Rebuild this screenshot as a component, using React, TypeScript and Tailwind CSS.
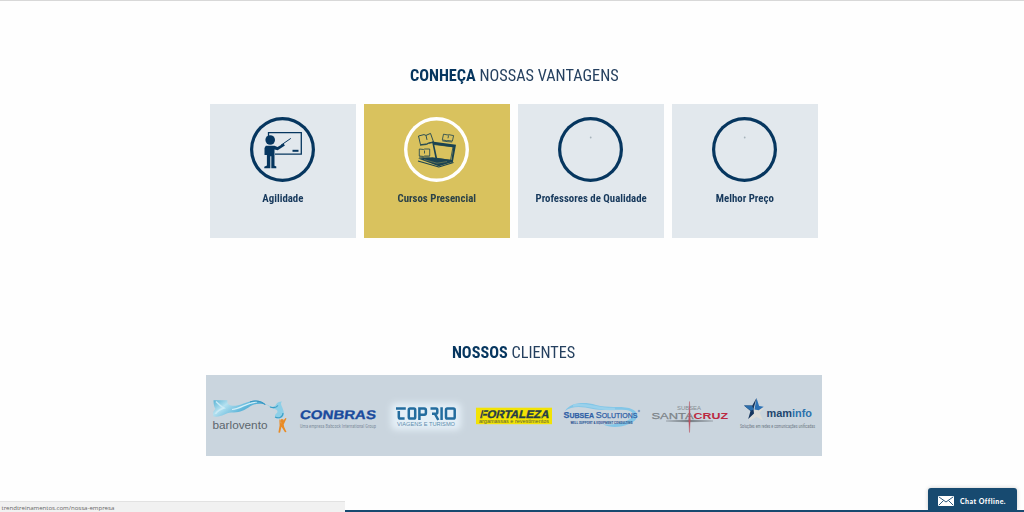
import React from "react";

const NAVY = "#06365f";

function TeacherIcon() {
  return (
    <svg viewBox="250 117 65 65" className="h-full w-full">
      <path d="M268.500 137V132.700H301.300V154.200H275" fill="none" stroke={NAVY} strokeWidth="1.300" />
      <rect x="292.500" y="149.800" width="6" height="2" fill={NAVY} />
      <circle cx="270.200" cy="140" r="4.800" fill={NAVY} />
      <path d="M265.800 145.800h8.700l3 1.200 6-3.600 1.400 2-7.200 4.900-3.200-.7v16.200l1.800.8v1.600h-5v-12h-1v12h-6v-1.400l2.600-1.200V155h-2.400v-7z" fill={NAVY} />
      <path d="M281 145.200l9.800-6.800" stroke={NAVY} strokeWidth="1" />
    </svg>
  );
}

function CoursesIcon() {
  const ink = "#1b4351";
  return (
    <svg viewBox="404 117 65 65" className="h-full w-full" fill="none" stroke={ink} strokeLinejoin="round">
      <path d="M418.500 136l5.500-1.400 2 .8 4.500-2 3 8.500-5 1-2 1-6 .8zM426 135.400l1 4.500M420 145.200l6.500-.7 2-1 5-1.100" strokeWidth=".9" />
      <path d="M443.500 134.200l4.500.8 1-.3 4.600.9-1.200 5.500-4.600-.6-1 .2-4.500-.8zM448.500 135.500l-.5 2.800M442.200 140.800l4.800.8 5.200.4" strokeWidth=".8" />
      <path d="M419.300 149l4.400.5 1-.5h5v7h-5l-1 .5-4.400-.5zM424.500 150.500v3M419 157l4.800.5 1-.4h5" strokeWidth=".8" />
      <path d="M432 141.500l24 3.200-3.200 17.500-1.700.6 2.100-15.600-19-2.600 3 14-1.500 1.200z" fill={ink} stroke="none" />
      <path d="M434 144.500l19 2.300-2.500 13.500-13.600-2" stroke={ink} strokeWidth=".8" />
      <path d="M418 158.500l14.500-1.200 4.500 .8 15 2 .500 1.800-13.700 4.300z" fill={ink} stroke="none" />
      <path d="M418 161l20.800 6 14.700-4.500" strokeWidth="1.100" />
      <path d="M424 159.600l13 3.600 10-1.600" stroke="#d9c25e" strokeWidth=".35" />
    </svg>
  );
}

function Dot() {
  return (
    <svg viewBox="0 0 65 65" className="h-full w-full">
      <circle cx="32.700" cy="20.500" r=".9" fill="#a8b3bb" />
    </svg>
  );
}

type CardProps = { label: string; icon: React.ReactNode; active?: boolean };

function Card({ label, icon, active }: CardProps) {
  return (
    <div className={`flex h-[134px] flex-col items-center pt-[13px] ${active ? "bg-[#d9c25e]" : "bg-[#e2e8ed]"}`}>
      <div className={`mr-px h-[65px] w-[65px] rounded-full ${active ? "shadow-[inset_0_0_0_3.4px_#fff]" : "shadow-[inset_0_0_0_3.2px_#06365f]"}`}>
        {icon}
      </div>
      <p className={`mt-[8px] scale-x-[0.94] text-[11.5px] leading-[16px] font-bold whitespace-nowrap ${active ? "text-[#2b4248]" : "text-[#17395c]"}`}>
        {label}
      </p>
    </div>
  );
}

function Heading({ strong, children }: { strong: string; children: React.ReactNode }) {
  return (
    <h2 className="ml-[4px] h-[25px] scale-x-[0.955] text-[17px] leading-[25px] whitespace-nowrap text-[#25405f]">
      <b className="text-[#06365f]">{strong}</b> {children}
    </h2>
  );
}

type TProps = React.SVGProps<SVGTextElement> & { w: number };

function T({ w, children, ...rest }: TProps) {
  return (
    <text textLength={w} lengthAdjust="spacingAndGlyphs" fontFamily="'Liberation Sans', sans-serif" {...rest}>
      {children}
    </text>
  );
}

const logo = "h-[81px] w-[88px]";
const condensed = "'Roboto Condensed', 'Roboto', sans-serif";

function Barlovento() {
  return (
    <svg viewBox="206 375 88 81" className={logo}>
      <defs>
        <linearGradient id="wave" x1="0" y1="0" x2="1" y2=".4">
          <stop offset="0" stopColor="#58b2d4" />
          <stop offset=".3" stopColor="#b5e1f0" />
          <stop offset=".65" stopColor="#62b8db" />
          <stop offset="1" stopColor="#3b9cc9" />
        </linearGradient>
      </defs>
      <path d="M213.500 400.200h14c-1 4 3 6 8 5.500 8-1 13-5.200 20-5.200 5 0 8 2 11 4.500-8-2.500-13-1-18 2.500-6 4-10 5-17 5-7 .2-9 5-18 4-1.500-5 1-6 2-7.500-1-1.500-2-4-2-8.800z" fill="url(#wave)" />
      <path d="M216 401.500c3 3 5 5 8 6.500-3 1-7 3-8.500 6" fill="none" stroke="#cbeaf5" strokeWidth="1.400" />
      <path d="M232 409.500c10-1 14-7 25-7.500" fill="none" stroke="#d3eff8" strokeWidth="1.200" />
      <path d="M250 402c5-2 11-1 15 2.500" fill="none" stroke="#3393bf" strokeWidth="1" />
      <path d="M266 404c6 4 9 3 10 .500 1-2 3-3 6-3-2 2-.5 4 .5 6.500 1 3 2 5 1 8-1.500 3-7 3.500-8.500.5-.5-2.500 2.500-3 2.500-5 0-3-6-2-11.500-7.500z" fill="#8dcfe7" />
      <path d="M275 417c4 2 8 0 8-4M270 407c3 1 6 1 8-1.500" fill="none" stroke="#3b9dc6" strokeWidth="1.100" />
      <circle cx="282" cy="421" r="1.900" fill="#e98b25" />
      <path d="M279.300 418.500l1.700 5 4.500-5.500 1 .5-2.800 6 .5 2.500 2.300 5-1.500.3-3.500-5.500-1.500 6-1.600-.2 1.200-7z" fill="#e98b25" />
      <T x="212.500" y="429" w={55} fontSize="11" fill="#5c666d">barlovento</T>
    </svg>
  );
}

function Conbras() {
  return (
    <svg viewBox="294 375 88 81" className={logo}>
      <g transform="translate(299.500 419) skewX(-8)">
        <T x="0" y="0" w={76} fontSize="12.500" fontWeight="bold" fill="#1b4b9d" stroke="#1b4b9d" strokeWidth=".3">CONBRAS</T>
      </g>
      <T x="300" y="428" w={76} fontSize="4.600" fill="#8290a0" fontFamily={condensed}>Uma empresa Babcock International Group</T>
    </svg>
  );
}

function TopRio() {
  return (
    <svg viewBox="382 375 88 81" className={logo}>
      <defs>
        <filter id="glow" x="-20%" y="-40%" width="140%" height="180%"><feGaussianBlur stdDeviation="3" /></filter>
      </defs>
      <rect x="391" y="403" width="70" height="27" rx="5" fill="#e4eff7" filter="url(#glow)" />
      <g fill="none" stroke="#236c9e" strokeWidth="2.500">
        <path d="M396 408.600h9.800M398.800 411v6q0 1.600 1.600 1.600h4.200" />
        <rect x="408.800" y="408.600" width="6.400" height="10" rx="1.300" />
        <path d="M419.400 420v-11.400h4.800q1.700 0 1.700 1.700v2.800q0 1.700-1.700 1.700H419.400" />
        <path d="M430.500 408.600h5.500q1.300 0 1.300 1.500v2.200q0 1.500-1.300 1.500h-4M435 414l3.300 6M441.600 407.200V420" />
        <rect x="446" y="408.600" width="8.700" height="10" rx="1.300" />
      </g>
      <T x="397" y="426.300" w={58} fontSize="5" fill="#5d8cad">VIAGENS E TURISMO</T>
    </svg>
  );
}

function Fortaleza() {
  return (
    <svg viewBox="470 375 88 81" className={logo}>
      <rect x="476" y="407.700" width="76" height="16.500" fill="#f2e304" />
      <g transform="translate(479.500 418) skewX(-14)">
        <T x="0" y="0" w={69} fontSize="11" fontWeight="bold" fill="#263d48" stroke="#263d48" strokeWidth=".4">FORTALEZA</T>
        <path d="M2.500 0v-8M19 0v-8M38.500 0v-5M62 0v-8" stroke="#f2e304" strokeWidth=".6" />
      </g>
      <T x="479" y="422.800" w={70} fontSize="5" fill="#59623b">argamassas e revestimentos</T>
    </svg>
  );
}

function SubseaSolutions() {
  return (
    <svg viewBox="558 375 88 81" className={logo}>
      <path d="M565 411c5-8 18-10 31-6 12 3 23 1 33 3 11 3 11 12 0 16-8 3.500-19 4-26 .5 11 .5 21-1.500 27-5.500 6-4 3-8-4-9-12-1-22 1-33-1-12-3-22-3-28 2z" fill="#83c6e7" />
      <path d="M573 405.500c14-3 24 4.500 42 3.500" fill="none" stroke="#9ad1eb" strokeWidth="2.500" />
      <text x="563.500" y="418" textLength="74" lengthAdjust="spacingAndGlyphs" fontFamily="'Liberation Sans', sans-serif" fontSize="7.500" fill="#2f5fa6" stroke="#2f5fa6" strokeWidth=".25">
        <tspan fontSize="9.500" fontWeight="bold">S</tspan><tspan fontWeight="bold">UBSEA </tspan><tspan fontSize="9.500">S</tspan>OLUTIONS
      </text>
      <circle cx="639" cy="411" r=".8" fill="none" stroke="#2f5fa6" strokeWidth=".5" />
      <T x="570.500" y="423.600" w={62} fontSize="3.700" fill="#345b94" fontWeight="bold" fontFamily={condensed}>WELL SUPPORT &amp; EQUIPMENT CONSULTING</T>
    </svg>
  );
}

function SantaCruz() {
  return (
    <svg viewBox="646 375 88 81" className={logo}>
      <T x="677" y="409.500" w={24} fontSize="4.800" fill="#858d93">SUBSEA</T>
      <T x="651.500" y="419" w={42} fontSize="9.500" fill="#7c8388" stroke="#7c8388" strokeWidth=".25">SANTA</T>
      <T x="693.500" y="419" w={34.500} fontSize="9.500" fill="#bc2941" fontWeight="bold">CRUZ</T>
      <path d="M666 421l23-1 24 1-24 1z" fill="#747c82" stroke="#747c82" strokeWidth=".3" />
      <path d="M689.500 401.500l.8 18-.8 13-.8-13z" fill="#ba5261" stroke="#ba5261" strokeWidth=".4" />
    </svg>
  );
}

function Maminfo() {
  return (
    <svg viewBox="734 375 88 81" className={logo}>
      <path d="M754 410l5-2.500 5 .5-4.500 4.500 3.500 8-6.500-3.700-7.500 4.500 2.500-8.500z" fill="#dddcd7" />
      <path d="M756.500 398l2.600 8 4.600.8-5 3.400-4.200-.7z" fill="#2d72b5" />
      <path d="M756.500 398l-4.200 7.500-8.300 0 6.500 5.500-2.300 8 5.800-5.500-.500-4.500z" fill="#17365e" />
      <path d="M744 405.500l8 .2 1.700 3.800-3 1.200z" fill="#2b6fad" />
      <text x="766.500" y="417" textLength="45.500" lengthAdjust="spacingAndGlyphs" fontFamily="'Liberation Sans', sans-serif" fontSize="10" fontWeight="bold" fill="#21466e">
        mam<tspan fill="#2c72ad">info</tspan>
      </text>
      <T x="740" y="427.500" w={75} fontSize="4.500" fill="#707d88" fontFamily={condensed}>Soluções em redes e comunicações unificadas</T>
    </svg>
  );
}

export default function App() {
  return (
    <div className="flex h-[512px] w-[1024px] flex-col overflow-hidden border-t border-[#d8d8d8] bg-[#fefefe] font-['Roboto_Condensed','Roboto',sans-serif] [font-stretch:75%]">
      <section className="flex flex-col items-center pt-[62px]">
        <Heading strong="CONHEÇA">NOSSAS VANTAGENS</Heading>
        <div className="mt-[16px] ml-[4px] grid w-[608px] grid-cols-4 gap-2">
          <Card label="Agilidade" icon={<TeacherIcon />} />
          <Card label="Cursos Presencial" icon={<CoursesIcon />} active />
          <Card label="Professores de Qualidade" icon={<Dot />} />
          <Card label="Melhor Preço" icon={<Dot />} />
        </div>
      </section>
      <section className="flex flex-col items-center pt-[102px]">
        <Heading strong="NOSSOS">CLIENTES</Heading>
        <div className="mt-[10px] ml-[4px] flex h-[81px] w-[616px] bg-[#cad5de]">
          <Barlovento />
          <Conbras />
          <TopRio />
          <Fortaleza />
          <SubseaSolutions />
          <SantaCruz />
          <Maminfo />
        </div>
      </section>
      <footer className="mt-auto flex h-[24px] items-end">
        <div className="flex h-[11px] w-[345px] items-center border-t border-[#e2e2e2] bg-[#f1f1f1] pt-[2px] pl-[1.5px] font-['Open_Sans',sans-serif] text-[6.1px] leading-none tracking-[-0.02px] text-[#666] [font-stretch:100%]">
          trendtreinamentos.com/nossa-empresa
        </div>
        <div className="flex flex-1 flex-col items-end">
          <div className="mr-[7px] flex h-[22px] w-[89px] items-center rounded-t-[3px] bg-[#174a70] pt-[3px] pl-[10px] shadow-[0_0_4px_#0003]">
            <svg viewBox="0 0 16 10" className="h-[10px] w-[16px]">
              <rect width="16" height="10" rx="1" fill="#fff" />
              <path d="M1 1l7 5 7-5M1 9l4.500-4.500M15 9l-4.500-4.500" fill="none" stroke="#174a70" strokeWidth=".9" />
            </svg>
            <span className="ml-[6px] font-['Lato',sans-serif] text-[7px] leading-[10px] font-black tracking-[0.45px] whitespace-nowrap text-white">Chat Offline.</span>
          </div>
          <div className="h-[2px] w-full bg-[#174a70]" />
        </div>
      </footer>
    </div>
  );
}
